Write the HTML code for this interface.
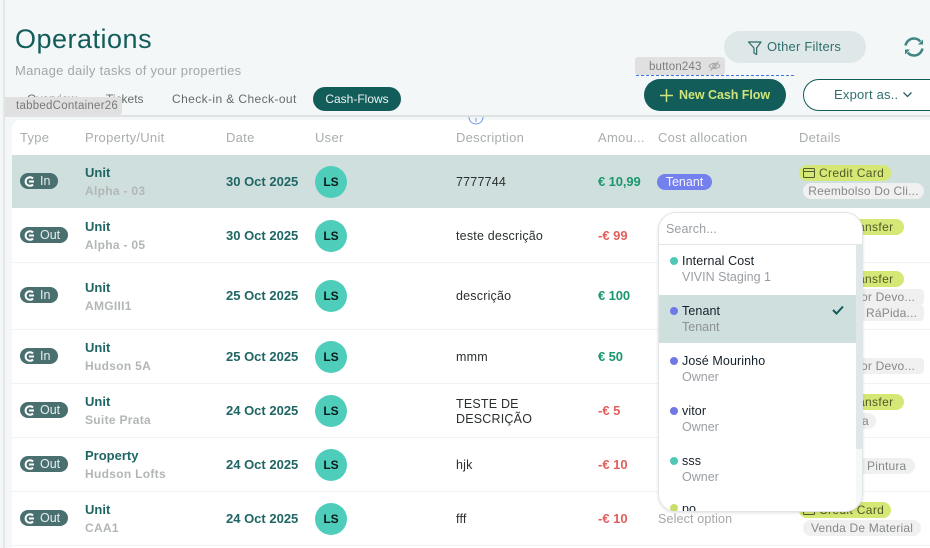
<!DOCTYPE html>
<html><head><meta charset="utf-8">
<style>
html,body{margin:0;padding:0;width:930px;height:548px;overflow:hidden;background:#f3f7f8;font-family:"Liberation Sans",sans-serif}
#p{position:relative;width:930px;height:548px;overflow:hidden;background:#f3f7f8}
.t{position:absolute;white-space:nowrap;line-height:16px}
.b{position:absolute}
.hd{color:#a9adad;font-size:13px;top:130px;letter-spacing:.28px}
.u{color:#1f6563;font-size:13px;font-weight:bold;left:85px}
.s{color:#b2b6b6;font-size:12px;font-weight:bold;left:85px;letter-spacing:.3px}
.d{color:#1f6563;font-size:13px;font-weight:bold;left:226px}
.av{position:absolute;left:315px;width:32px;height:32px;border-radius:50%;background:#4fcdbb;color:#0b1a1a;font-size:12px;font-weight:bold;line-height:32px;text-align:center}
.x{color:#2b2f2f;font-size:12.5px;left:456px;letter-spacing:.2px}
.g{color:#1b966d;font-size:13px;font-weight:bold;left:598px;letter-spacing:-.1px}
.r{color:#e25f5c;font-size:13px;font-weight:bold;left:598px}
.pill{position:absolute;left:20px;height:16px;border-radius:8px;background:#4a6f6f;color:#e6eeee;font-size:12.5px;line-height:16px}
.pill svg{position:absolute;left:4px;top:2.5px}
.pill span{position:absolute;left:20px;top:0}
.y{position:absolute;height:16px;border-radius:8px;background:#d5e875;color:#4f5a2a;font-size:12px;line-height:16px;white-space:nowrap;overflow:hidden;letter-spacing:.35px}
.c{position:absolute;height:16px;border-radius:8px;background:#f0f0f0;color:#858989;font-size:12px;line-height:16px;white-space:nowrap;overflow:hidden;letter-spacing:.2px}
.ln{position:absolute;left:12px;width:918px;height:1px;background:#eef3f3}
.dot{position:absolute;left:670px;width:8px;height:8px;border-radius:50%}
.on{color:#16202a;font-size:12.5px;left:682px;letter-spacing:.1px}
.os{color:#9a9ea3;font-size:12.5px;left:682px}
</style></head><body><div id="p">
<div class="b" style="left:3px;top:0;width:2px;height:548px;background:#e3e7e8"></div>
<div class="t" style="left:15px;top:24px;font-size:27px;line-height:30px;color:#125c5a;letter-spacing:.5px">Operations</div>
<div class="t" style="left:15px;top:63px;font-size:13px;color:#a3a7a7;letter-spacing:.28px">Manage daily tasks of your properties</div>
<div class="t" style="left:27px;top:91px;font-size:12px;color:#666b6b">Overview</div>
<div class="t" style="left:106px;top:91px;font-size:12px;color:#666b6b">Tickets</div>
<div class="t" style="left:172px;top:91px;font-size:12px;color:#666b6b;letter-spacing:.4px">Check-in &amp; Check-out</div>
<div class="b" style="left:313px;top:87px;width:88px;height:24px;border-radius:12px;background:#125c5a;color:#eef5f4;font-size:12px;line-height:24px;text-align:center">Cash-Flows</div>

<div class="b" style="left:724px;top:31px;width:142px;height:32px;border-radius:16px;background:#dfe8e8"></div>
<svg class="b" style="left:747px;top:40px" width="16" height="16" viewBox="0 0 16 16" fill="none" stroke="#2f6b69" stroke-width="1.2"><path d="M1.5 2h12.5L9.6 8v6.5L7 13V8z" stroke-linejoin="round"/></svg>
<div class="t" style="left:767px;top:39px;font-size:13px;color:#2f6f6d;letter-spacing:.2px">Other Filters</div>
<svg class="b" style="left:903px;top:36px" width="22" height="22" viewBox="0 0 22 22" fill="none" stroke="#3f8583" stroke-width="2.6"><path d="M2.500 9.500C3.500 5.200 7 2.500 11 2.500c2.600 0 4.800 1.100 6.300 2.900"/><path d="M19.500 12.500c-1 4.300-4.500 7-8.500 7-2.600 0-4.800-1.100-6.300-2.900"/><path d="M20 3.500v5h-5zM2 18.500v-5h5z" fill="#3f8583" stroke="none"/></svg>

<div class="b" style="left:635px;top:57px;width:90px;height:18px;border-radius:3px;background:#e0e0e0"></div>
<div class="t" style="left:649px;top:59px;font-size:11.500px;color:#7d7f7f;letter-spacing:.15px">button243</div>
<svg class="b" style="left:708px;top:61px" width="13" height="10" viewBox="0 0 13 10" fill="none" stroke="#a5a7a7"><path d="M1 5c2.500-3.500 8.500-3.500 11 0-2.500 3.500-8.500 3.500-11 0zM2.500 9.500l8-9"/><circle cx="6.500" cy="5" r="1.800"/></svg>
<div class="b" style="left:636px;top:75px;width:158px;border-top:1px dashed #3f78e0"></div>
<div class="b" style="left:644px;top:79px;width:142px;height:32px;border-radius:16px;background:#125c5a"></div>
<svg class="b" style="left:659px;top:88px" width="15" height="15" viewBox="0 0 15 15" stroke="#cfe57a" stroke-width="1.500"><path d="M7.500 1v13M1 7.500h13"/></svg>
<div class="t" style="left:679px;top:87px;font-size:12.500px;font-weight:bold;color:#cfe57a;letter-spacing:-.05px">New Cash Flow</div>
<div class="b" style="left:803px;top:79px;width:140px;height:30px;border-radius:16px;background:#fff;border:1px solid #125c5a"></div>
<div class="t" style="left:834px;top:87px;font-size:13px;color:#2f6f6d;letter-spacing:.2px">Export as..</div>
<svg class="b" style="left:902px;top:91px" width="11" height="8" viewBox="0 0 11 8" fill="none" stroke="#2f5f5e" stroke-width="1.300"><path d="M1.500 1.500l4 4 4-4"/></svg>

<div class="b" style="left:5px;top:115px;width:925px;height:2px;background:#dfe2e2"></div>
<div class="b" style="left:12px;top:120px;width:918px;height:428px;background:#fff;border-radius:8px 0 0 0"></div>
<svg class="b" style="left:468px;top:117px" width="16" height="8" viewBox="0 0 16 8" fill="none" stroke="#6f95ea"><path d="M1 0a7 7 0 0 0 14 0M8 1v4"/></svg>
<div class="b" style="left:5px;top:97px;width:117px;height:18px;border-radius:0 3px 3px 0;background:#e0e0e0"></div>
<div class="t" style="left:16px;top:98px;font-size:11.500px;color:#777a7a;letter-spacing:.25px">tabbedContainer26</div>

<div class="t hd" style="left:20px">Type</div>
<div class="t hd" style="left:85px">Property/Unit</div>
<div class="t hd" style="left:226px">Date</div>
<div class="t hd" style="left:315px">User</div>
<div class="t hd" style="left:456px">Description</div>
<div class="t hd" style="left:598px">Amou...</div>
<div class="t hd" style="left:658px">Cost allocation</div>
<div class="t hd" style="left:799px">Details</div>

<div class="b" style="left:12px;top:155px;width:918px;height:53px;background:#cfdfdd"></div>
<div class="ln" style="top:262px"></div><div class="ln" style="top:329px"></div><div class="ln" style="top:383px"></div><div class="ln" style="top:437px"></div><div class="ln" style="top:491px"></div><div class="ln" style="top:545px"></div>

<!-- row 1 -->
<div class="pill" style="top:173px;width:38px"><svg width="11" height="11" viewBox="0 0 11 11" fill="none" stroke="#fff" stroke-width="2"><path d="M9 2.500A4.300 4.300 0 1 0 9 8.500M5 5.500h5"/></svg><span>In</span></div>
<div class="t u" style="top:165px">Unit</div><div class="t s" style="top:183px">Alpha - 03</div>
<div class="t d" style="top:174px">30 Oct 2025</div><div class="av" style="top:166px">LS</div>
<div class="t x" style="top:174px">7777744</div><div class="t g" style="top:174px">€ 10,99</div>
<div class="b" style="left:657px;top:174px;width:55px;height:16px;border-radius:8px;background:#7480ee;color:#f2f3ff;font-size:12.500px;line-height:16px;text-align:center">Tenant</div>
<div class="y" style="left:799px;top:165px;width:92px"><svg style="position:absolute;left:4px;top:3px" width="12" height="10" viewBox="0 0 12 10" fill="none" stroke="#4f5a2a"><rect x=".5" y=".5" width="11" height="9" rx="1"/><path d="M.5 3.500h11"/></svg><span style="position:absolute;left:20px">Credit Card</span></div>
<div class="c" style="left:803px;top:183px;width:121px;text-align:center">Reembolso Do Cli...</div>

<!-- row 2 -->
<div class="pill" style="top:227px;width:48px"><svg width="11" height="11" viewBox="0 0 11 11" fill="none" stroke="#fff" stroke-width="2"><path d="M9 2.500A4.300 4.300 0 1 0 9 8.500M5 5.500h5"/></svg><span>Out</span></div>
<div class="t u" style="top:219px">Unit</div><div class="t s" style="top:237px">Alpha - 05</div>
<div class="t d" style="top:228px">30 Oct 2025</div><div class="av" style="top:220px">LS</div>
<div class="t x" style="top:228px">teste descrição</div><div class="t r" style="top:228px">-€ 99</div>
<div class="y" style="left:840px;top:219px;width:64px"><span style="position:absolute;left:18px">ansfer</span></div>

<!-- row 3 -->
<div class="pill" style="top:287px;width:38px"><svg width="11" height="11" viewBox="0 0 11 11" fill="none" stroke="#fff" stroke-width="2"><path d="M9 2.500A4.300 4.300 0 1 0 9 8.500M5 5.500h5"/></svg><span>In</span></div>
<div class="t u" style="top:280px">Unit</div><div class="t s" style="top:298px">AMGIII1</div>
<div class="t d" style="top:288px">25 Oct 2025</div><div class="av" style="top:280px">LS</div>
<div class="t x" style="top:288px">descrição</div><div class="t g" style="top:288px">€ 100</div>
<div class="y" style="left:840px;top:271px;width:64px"><span style="position:absolute;left:18px">ansfer</span></div>
<div class="c" style="left:840px;top:289px;width:84px;border-radius:4px"><span style="position:absolute;left:21px">or Devo...</span></div>
<div class="c" style="left:840px;top:305px;width:84px;border-radius:4px"><span style="position:absolute;left:26px">RáPida...</span></div>

<!-- row 4 -->
<div class="pill" style="top:348px;width:38px"><svg width="11" height="11" viewBox="0 0 11 11" fill="none" stroke="#fff" stroke-width="2"><path d="M9 2.500A4.300 4.300 0 1 0 9 8.500M5 5.500h5"/></svg><span>In</span></div>
<div class="t u" style="top:340px">Unit</div><div class="t s" style="top:358px">Hudson 5A</div>
<div class="t d" style="top:349px">25 Oct 2025</div><div class="av" style="top:341px">LS</div>
<div class="t x" style="top:349px">mmm</div><div class="t g" style="top:349px">€ 50</div>
<div class="c" style="left:840px;top:358px;width:84px;border-radius:4px"><span style="position:absolute;left:21px">or Devo...</span></div>

<!-- row 5 -->
<div class="pill" style="top:402px;width:48px"><svg width="11" height="11" viewBox="0 0 11 11" fill="none" stroke="#fff" stroke-width="2"><path d="M9 2.500A4.300 4.300 0 1 0 9 8.500M5 5.500h5"/></svg><span>Out</span></div>
<div class="t u" style="top:394px">Unit</div><div class="t s" style="top:412px">Suite Prata</div>
<div class="t d" style="top:403px">24 Oct 2025</div><div class="av" style="top:395px">LS</div>
<div class="t x" style="top:396px">TESTE DE</div><div class="t x" style="top:411px">DESCRIÇÃO</div><div class="t r" style="top:403px">-€ 5</div>
<div class="y" style="left:840px;top:394px;width:64px"><span style="position:absolute;left:18px">ansfer</span></div>
<div class="c" style="left:840px;top:413px;width:36px"><span style="position:absolute;left:22px">a</span></div>

<!-- row 6 -->
<div class="pill" style="top:456px;width:48px"><svg width="11" height="11" viewBox="0 0 11 11" fill="none" stroke="#fff" stroke-width="2"><path d="M9 2.500A4.300 4.300 0 1 0 9 8.500M5 5.500h5"/></svg><span>Out</span></div>
<div class="t u" style="top:448px">Property</div><div class="t s" style="top:466px">Hudson Lofts</div>
<div class="t d" style="top:457px">24 Oct 2025</div><div class="av" style="top:449px">LS</div>
<div class="t x" style="top:457px">hjk</div><div class="t r" style="top:457px">-€ 10</div>
<div class="c" style="left:840px;top:458px;width:75px"><span style="position:absolute;left:27px">Pintura</span></div>

<!-- row 7 -->
<div class="pill" style="top:510px;width:48px"><svg width="11" height="11" viewBox="0 0 11 11" fill="none" stroke="#fff" stroke-width="2"><path d="M9 2.500A4.300 4.300 0 1 0 9 8.500M5 5.500h5"/></svg><span>Out</span></div>
<div class="t u" style="top:502px">Unit</div><div class="t s" style="top:520px">CAA1</div>
<div class="t d" style="top:511px">24 Oct 2025</div><div class="av" style="top:503px">LS</div>
<div class="t x" style="top:511px">fff</div><div class="t r" style="top:511px">-€ 10</div>
<div class="t" style="left:658px;top:511px;font-size:12.500px;color:#a3a7a7;letter-spacing:.15px">Select option</div>
<div class="y" style="left:799px;top:502px;width:92px"><svg style="position:absolute;left:4px;top:3px" width="12" height="10" viewBox="0 0 12 10" fill="none" stroke="#4f5a2a"><rect x=".5" y=".5" width="11" height="9" rx="1"/><path d="M.5 3.500h11"/></svg><span style="position:absolute;left:20px">Credit Card</span></div>
<div class="c" style="left:803px;top:520px;width:118px;text-align:center">Venda De Material</div>

<!-- dropdown -->
<div class="b" style="left:658px;top:212px;width:205px;height:300px;background:#fff;border:1px solid #e3e6e6;box-sizing:border-box;border-radius:18px;box-shadow:0 1px 3px rgba(0,0,0,.12);overflow:hidden">
  <div class="b" style="left:0;top:31px;width:203px;height:1px;background:#e3e7e7"></div>
  <div class="b" style="left:0;top:82px;width:197px;height:48px;background:#cfdfdd"></div>
  <div class="b" style="left:197px;top:32px;width:6px;height:204px;background:#dfe8e8"></div>
  <div class="b" style="left:197px;top:236px;width:6px;height:62px;background:#f5f8f8"></div>
</div>
<div class="t" style="left:666px;top:221px;font-size:12.500px;color:#9a9ea3;letter-spacing:.1px">Search...</div>
<div class="dot" style="top:257px;background:#4fc9b6"></div><div class="t on" style="top:253px">Internal Cost</div><div class="t os" style="top:269px">VIVIN Staging 1</div>
<div class="dot" style="top:307px;background:#6f78e6"></div><div class="t on" style="top:303px">Tenant</div><div class="t os" style="top:319px;color:#8b9396">Tenant</div>
<svg class="b" style="left:832px;top:305px" width="12" height="10" viewBox="0 0 12 10" fill="none" stroke="#125c5a" stroke-width="2"><path d="M1 5l3.500 3.500L11 1.500"/></svg>
<div class="dot" style="top:357px;background:#6f78e6"></div><div class="t on" style="top:353px">José Mourinho</div><div class="t os" style="top:369px">Owner</div>
<div class="dot" style="top:407px;background:#6f78e6"></div><div class="t on" style="top:403px">vitor</div><div class="t os" style="top:419px">Owner</div>
<div class="dot" style="top:457px;background:#4fc9b6"></div><div class="t on" style="top:453px">sss</div><div class="t os" style="top:469px">Owner</div>
<div class="b" style="left:659px;top:504px;width:197px;height:7px;overflow:hidden"><div class="dot" style="left:11px;top:0;background:#c9de6a"></div><div class="t on" style="left:23px;top:-3px">po</div></div>
</div></body></html>
